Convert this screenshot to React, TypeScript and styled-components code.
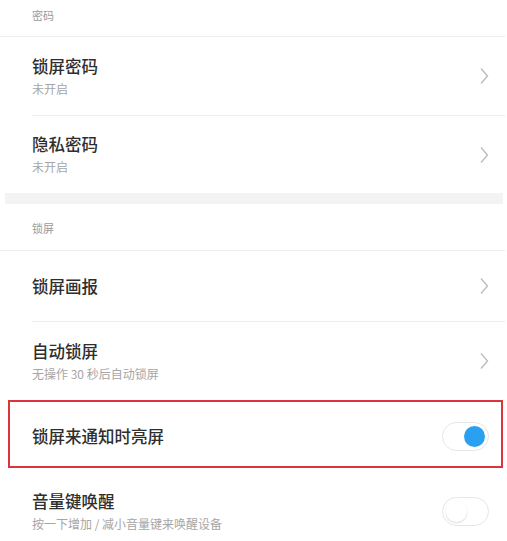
import React from 'react';
import styled, { createGlobalStyle } from 'styled-components';

const GlobalStyle = createGlobalStyle`
  html, body {
    margin: 0;
    padding: 0;
    background: #fff;
  }
  body {
    font-family: "Noto Sans CJK SC", "Noto Sans", sans-serif;
    color: #333;
    overflow: hidden;
  }
`;

const Page = styled.div`
  width: 507px;
  height: 541px;
  overflow: hidden;
  display: flex;
  flex-direction: column;
  background: #fff;
`;

const SectionHeader = styled.div<{ h: number; pt: number }>`
  height: ${p => p.h}px;
  box-sizing: border-box;
  flex-shrink: 0;
  padding: ${p => p.pt}px 0 0 32px;
  font-size: 11px;
  line-height: 16px;
  color: #9a9a9a;
  border-bottom: 1px solid #ececec;
  margin-right: 2px;
`;

const Row = styled.div<{ h: number; divider?: boolean }>`
  height: ${p => p.h}px;
  box-sizing: border-box;
  display: flex;
  align-items: center;
  margin-left: 32px;
  margin-right: 2px;
  padding-right: 16px;
  border-bottom: ${p => (p.divider ? '1px solid #ececec' : 'none')};
  flex-shrink: 0;
`;

const Texts = styled.div`
  flex: 1;
  display: flex;
  flex-direction: column;
  gap: 4px;
`;

const Title = styled.div`
  font-size: 16.5px;
  line-height: 20px;
  font-weight: 500;
  color: #2e2e2e;
`;

const Sub = styled.div`
  font-size: 12px;
  line-height: 17px;
  color: #a6a6a6;
`;

const Band = styled.div`
  height: 11px;
  background: #f3f3f3;
  margin: 0 4px 0 5px;
  flex-shrink: 0;
`;

const Highlight = styled.div`
  height: 68px;
  box-sizing: border-box;
  margin: 0 4px 0 8px;
  border: 2px solid #d8353d;
  display: flex;
  align-items: center;
  padding: 4px 12px 0 22px;
  flex-shrink: 0;
`;

const Track = styled.div<{ on?: boolean }>`
  width: 47px;
  height: 29px;
  box-sizing: border-box;
  border-radius: 15px;
  border: 1px solid #e6e6e6;
  background: #fff;
  display: flex;
  align-items: center;
  justify-content: ${p => (p.on ? 'flex-end' : 'flex-start')};
  padding: 0 3px;
`;

const Knob = styled.div<{ on?: boolean }>`
  width: 21px;
  height: 21px;
  border-radius: 50%;
  background: ${p => (p.on ? '#2b9ff0' : '#fff')};
  box-shadow: ${p => (p.on ? 'none' : '0 1px 2px rgba(0,0,0,0.15)')};
`;

const Chevron = () => (
  <svg width="10" height="20" viewBox="0 0 10 20">
    <path d="M2 2.5 L8.5 10 L2 17.5" fill="none" stroke="#bdbdbd" strokeWidth="1.4" />
  </svg>
);

export default function App() {
  return (
    <Page>
      <GlobalStyle />
      <SectionHeader h={37} pt={7}>密码</SectionHeader>
      <Row h={79} divider>
        <Texts>
          <Title>锁屏密码</Title>
          <Sub>未开启</Sub>
        </Texts>
        <Chevron />
      </Row>
      <Row h={77}>
        <Texts>
          <Title>隐私密码</Title>
          <Sub>未开启</Sub>
        </Texts>
        <Chevron />
      </Row>
      <Band />
      <SectionHeader h={47} pt={16}>锁屏</SectionHeader>
      <Row h={71} divider>
        <Texts>
          <Title>锁屏画报</Title>
        </Texts>
        <Chevron />
      </Row>
      <Row h={78}>
        <Texts>
          <Title>自动锁屏</Title>
          <Sub>无操作 30 秒后自动锁屏</Sub>
        </Texts>
        <Chevron />
      </Row>
      <Highlight>
        <Texts>
          <Title>锁屏来通知时亮屏</Title>
        </Texts>
        <Track on>
          <Knob on />
        </Track>
      </Highlight>
      <Row h={86}>
        <Texts>
          <Title>音量键唤醒</Title>
          <Sub>按一下增加 / 减小音量键来唤醒设备</Sub>
        </Texts>
        <Track>
          <Knob />
        </Track>
      </Row>
    </Page>
  );
}
